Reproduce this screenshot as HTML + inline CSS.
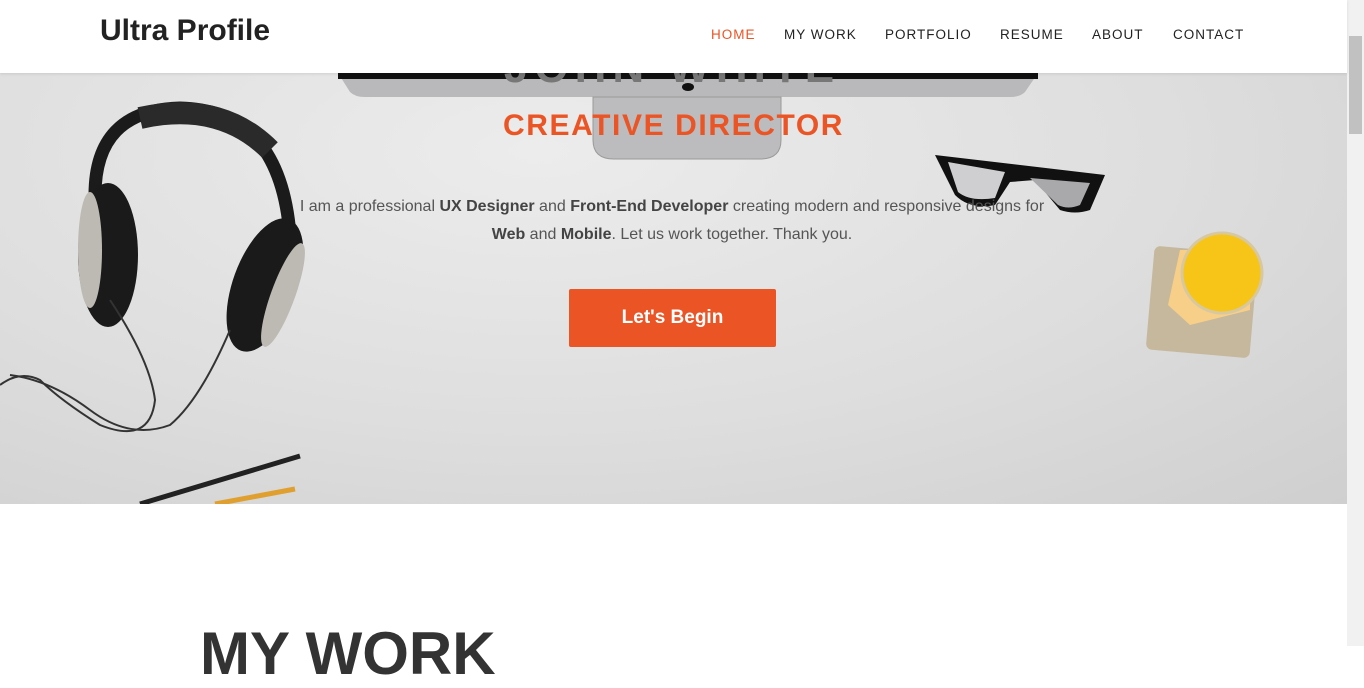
<!DOCTYPE html>
<html><head><meta charset="utf-8">
<style>
*{margin:0;padding:0;box-sizing:border-box}
html,body{width:1364px;height:646px;overflow:hidden;background:#fff;font-family:"Liberation Sans",Arial,sans-serif}
.hero{position:absolute;left:0;top:0;width:1347px;height:504px;background:radial-gradient(ellipse at 40% 30%,#ececec 0%,#dedede 55%,#cfcfcf 100%);overflow:hidden}
header{position:absolute;left:0;top:0;width:1347px;height:73px;background:#fff;box-shadow:0 1px 3px rgba(0,0,0,.1);z-index:5}
.logo{position:absolute;left:100px;top:14px;font-size:30px;font-weight:bold;color:#222}
nav{position:absolute;top:27px;left:711px;font-size:13.5px;letter-spacing:1px;color:#222}
nav span{position:absolute;white-space:nowrap}
.sb{position:absolute;left:1347px;top:0;width:17px;height:646px;background:#f1f1f1}
.sb .th{position:absolute;left:2px;top:36px;width:13px;height:98px;background:#c1c1c1}
h2.cd{position:absolute;left:0;width:1347px;top:109px;text-align:center;font-size:30px;letter-spacing:1.6px;color:#eb5424;font-weight:bold}
p.intro{position:absolute;left:290px;width:764px;top:193px;text-align:center;font-size:16px;line-height:28px;color:#555}
p.intro b{color:#444}
.btn{position:absolute;left:569px;top:289px;width:207px;height:58px;background:#eb5424;color:#fff;font-weight:bold;font-size:19px;text-align:center;line-height:58px;border-radius:2px}
.mw{position:absolute;left:200px;top:619px;font-size:60px;font-weight:bold;color:#333}
</style></head><body>
<div class="hero">
<svg width="1347" height="504" style="position:absolute;left:0;top:0">
 <path d="M338 73 L1038 73 L1025 92 Q1020 97 1010 97 L365 97 Q355 97 350 92 Z" fill="#b9b9bb"/>
 <rect x="338" y="60" width="700" height="19" fill="#111"/>
 <text x="672" y="82" text-anchor="middle" font-family="Liberation Sans" font-weight="bold" font-size="44" fill="#777" letter-spacing="6">JOHN WHITE</text>
 <path d="M593 97 L781 97 L781 140 Q781 159 760 159 L614 159 Q593 159 593 140 Z" fill="#bcbcbe" stroke="#9a9a9a"/>
 <ellipse cx="688" cy="87" rx="6" ry="4" fill="#111"/>
 <path d="M95 195 Q95 110 180 108 Q280 110 290 235" fill="none" stroke="#1b1b1b" stroke-width="13"/>
 <path d="M140 118 Q220 100 270 150" fill="none" stroke="#2a2a2a" stroke-width="22"/>
 <ellipse cx="108" cy="255" rx="30" ry="72" fill="#1a1a1a"/>
 <ellipse cx="90" cy="250" rx="12" ry="58" fill="#bdbab3"/>
 <ellipse cx="265" cy="285" rx="32" ry="70" transform="rotate(20 265 285)" fill="#1a1a1a"/>
 <ellipse cx="283" cy="295" rx="12" ry="55" transform="rotate(20 283 295)" fill="#bdbab3"/>
 <path d="M110 300 Q150 360 155 400 Q150 445 100 425 Q60 400 40 380 Q20 370 0 385" fill="none" stroke="#333" stroke-width="2"/>
 <path d="M230 330 Q200 400 170 425 Q130 440 90 410 Q50 380 10 375" fill="none" stroke="#333" stroke-width="2"/>
 <line x1="140" y1="504" x2="300" y2="456" stroke="#222" stroke-width="5"/>
 <line x1="215" y1="504" x2="295" y2="489" stroke="#e0a030" stroke-width="5"/>
 <path d="M935 155 L1105 175 L1090 210 Q1075 215 1060 210 L1035 180 L1010 182 L995 205 Q970 210 955 195 Z" fill="#111"/>
 <path d="M948 162 L1005 172 L995 198 Q970 202 958 192 Z" fill="#cfcfd1"/>
 <path d="M1030 178 L1090 183 L1080 205 Q1068 210 1058 205 Z" fill="#a9a8ab"/>
 <rect x="1150" y="250" width="104" height="104" rx="6" transform="rotate(5 1202 302)" fill="#c6b89c"/>
 <path d="M1180 250 L1250 250 L1250 310 L1190 325 L1168 305 Z" fill="#f7cf88"/>
 <circle cx="1222" cy="273" r="40" fill="#f6c518" stroke="#d8c8a0" stroke-width="3"/>
</svg>
<h2 class="cd">CREATIVE DIRECTOR</h2>
<p class="intro">I am a professional <b>UX Designer</b> and <b>Front-End Developer</b> creating modern and responsive designs for <b>Web</b> and <b>Mobile</b>. Let us work together. Thank you.</p>
<div class="btn">Let's Begin</div>
</div>
<header>
<div class="logo">Ultra Profile</div>
<nav>
<span style="left:0;color:#eb5424">HOME</span>
<span style="left:73px">MY WORK</span>
<span style="left:174px">PORTFOLIO</span>
<span style="left:289px">RESUME</span>
<span style="left:381px">ABOUT</span>
<span style="left:462px">CONTACT</span>
</nav>
</header>
<div class="mw">MY WORK</div>
<div class="sb"><div class="th"></div></div>
</body></html>
